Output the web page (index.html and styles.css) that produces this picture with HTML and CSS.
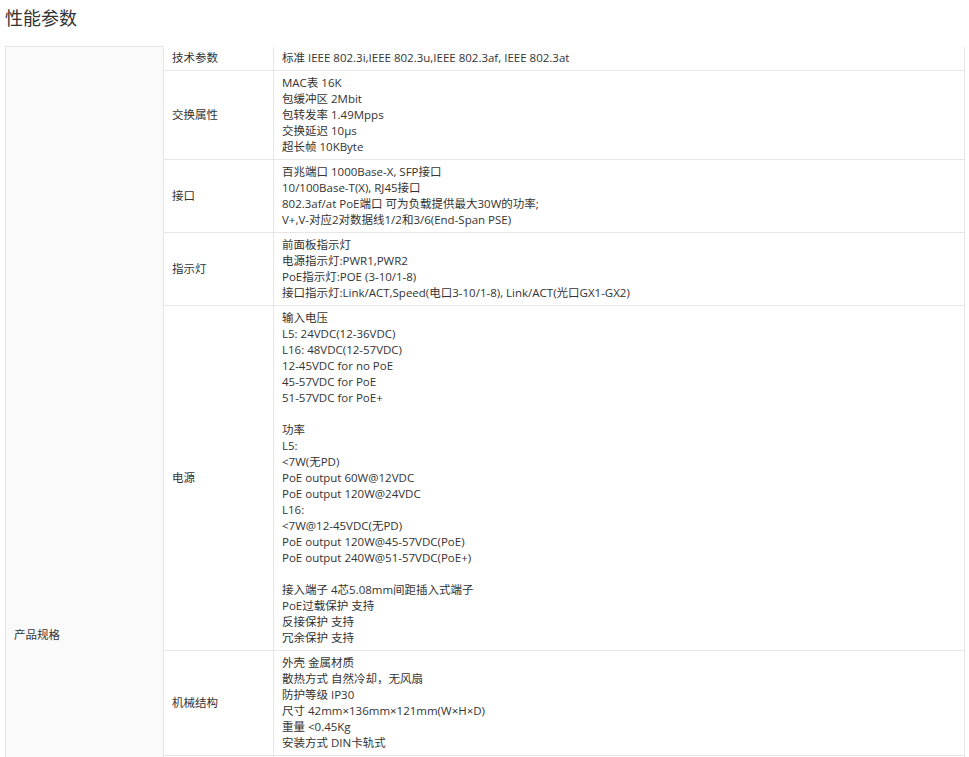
FILE: index.html
```html
<!DOCTYPE html>
<html lang="zh-CN">
<head>
    <meta charset="UTF-8">
    <title>性能参数</title>
    <link rel="stylesheet" href="styles.css">
</head>
<body>
    <div class="page">
        <h2 class="title">性能参数</h2>
        <table class="spec">
            <colgroup>
                <col class="c1">
                <col class="c2">
                <col>
            </colgroup>
            <tr>
                <th rowspan="10">产品规格</th>
                <td class="name">技术参数</td>
                <td>标准 IEEE 802.3i,IEEE 802.3u,IEEE 802.3af, IEEE 802.3at</td>
            </tr>
            <tr>
                <td class="name">交换属性</td>
                <td>MAC表 16K<br>包缓冲区 2Mbit<br>包转发率 1.49Mpps<br>交换延迟 10μs<br>超长帧 10KByte</td>
            </tr>
            <tr>
                <td class="name">接口</td>
                <td>百兆端口 1000Base-X, SFP接口<br>10/100Base-T(X), RJ45接口<br>802.3af/at PoE端口 可为负载提供最大30W的功率;<br>V+,V-对应2对数据线1/2和3/6(End-Span PSE)</td>
            </tr>
            <tr>
                <td class="name">指示灯</td>
                <td>前面板指示灯<br>电源指示灯:PWR1,PWR2<br>PoE指示灯:POE (3-10/1-8)<br>接口指示灯:Link/ACT,Speed(电口3-10/1-8), Link/ACT(光口GX1-GX2)</td>
            </tr>
            <tr>
                <td class="name">电源</td>
                <td>输入电压<br>L5: 24VDC(12-36VDC)<br>L16: 48VDC(12-57VDC)<br>12-45VDC for no PoE<br>45-57VDC for PoE<br>51-57VDC for PoE+<br><br>功率<br>L5:<br>&lt;7W(无PD)<br>PoE output 60W@12VDC<br>PoE output 120W@24VDC<br>L16:<br>&lt;7W@12-45VDC(无PD)<br>PoE output 120W@45-57VDC(PoE)<br>PoE output 240W@51-57VDC(PoE+)<br><br>接入端子 4芯5.08mm间距插入式端子<br>PoE过载保护 支持<br>反接保护 支持<br>冗余保护 支持</td>
            </tr>
            <tr>
                <td class="name">机械结构</td>
                <td>外壳 金属材质<br>散热方式 自然冷却，无风扇<br>防护等级 IP30<br>尺寸 42mm×136mm×121mm(W×H×D)<br>重量 &lt;0.45Kg<br>安装方式 DIN卡轨式</td>
            </tr>
            <tr>
                <td class="name">工作环境</td>
                <td>工作温度 -40~75°C<br>存储温度 -40~85°C<br>相对湿度 5%~95%（无凝露）<br>MTBF &gt;100000小时</td>
            </tr>
            <tr>
                <td class="name">行业标准</td>
                <td>EMI FCC Part 15 Subpart B Class A, EN 55022 Class A<br>EMS IEC(EN)61000-4-2(ESD)：±8kV(接触), ±15kV(空气)<br>IEC(EN)61000-4-3(RS)：10V/m(80~1000MHz)<br>IEC(EN)61000-4-4(EFT)：电源 ±4kV; 数据 ±2kV<br>IEC(EN)61000-4-5(Surge)：电源 ±2kV/DM, ±4kV/CM; 数据 ±2kV<br>IEC(EN)61000-4-6(CS)：3V(10kHz~150kHz); 10V(150kHz~80MHz)<br>IEC(EN)61000-4-8(PFMF)：100A/m(连续), 1000A/m(1s~3s)<br>IEC(EN)61000-4-9(PMF)：1000A/m<br>IEC(EN)61000-4-10(DOMF)：30A/m 1MHz<br>IEC(EN)61000-4-12/18(OW)：CM 2.5kV, DM 1kV<br>IEC(EN)61000-4-16(CM传导)：30V(连续), 300V(1s)<br>冲击 IEC(EN)60068-2-27<br>自由落体 IEC(EN)60068-2-32<br>振动 IEC(EN)60068-2-6</td>
            </tr>
            <tr>
                <td class="name">认证</td>
                <td>CE, FCC, RoHS<br>工业级设计<br>EN 50155 (轨道交通)<br>IEC 61850-3 (电力)</td>
            </tr>
            <tr>
                <td class="name">质保</td>
                <td>5年<br>终身技术支持<br>产品型号以实物为准<br>如有变更，恕不另行通知<br>详情请咨询销售人员</td>
            </tr>
        </table>
    </div>
</body>
</html>
```

FILE: styles.css
```css
body {
    margin: 0;
    background: #fff;
    color: #333;
    font-family: "Open Sans", "Noto Sans CJK SC", sans-serif;
}
.page {
    padding: 0 5px;
}
.title {
    margin: 0 0 10px;
    font-size: 18px;
    font-weight: normal;
    line-height: 36px;
    color: #333;
}
.spec {
    width: 960px;
    border-collapse: collapse;
    font-size: 11.5px;
    line-height: 16px;
}
.c1 {
    width: 158px;
}
.c2 {
    width: 110px;
}
.spec th,
.spec td {
    border: 1px solid #e6e6e6;
    padding: 4px 8px;
    text-align: left;
    vertical-align: middle;
    font-weight: normal;
}
.spec th {
    background: #fafafa;
}
.spec tr:first-child td {
    border-top: none;
    padding-top: 3px;
}
```
